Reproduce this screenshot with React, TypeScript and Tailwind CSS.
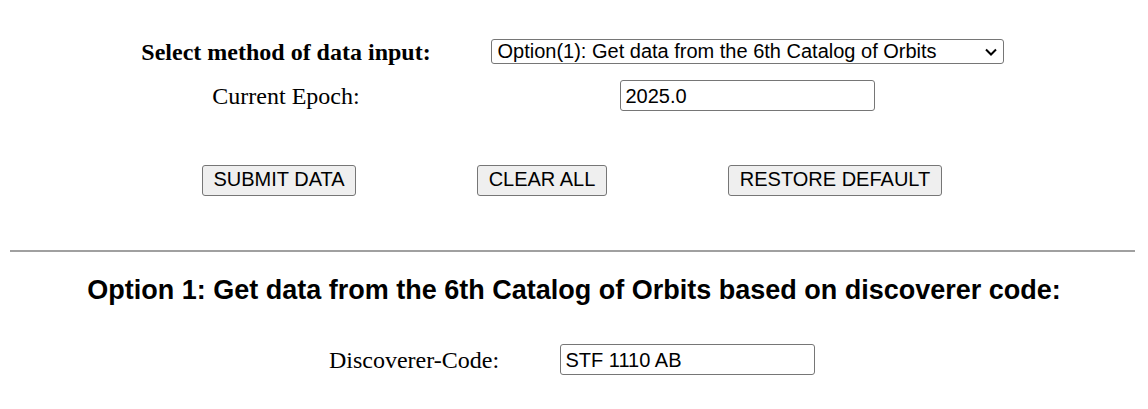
import React from 'react';

export default function App() {
  return (
    <div className="w-[1148px] h-[409px] bg-white text-black overflow-hidden px-[10px]">
      {/* data input method */}
      <div className="pt-[39px] pl-[90px]">
        <div className="flex items-center h-[25px]">
          <div className="w-[372px] flex justify-center">
            <span className="font-['Liberation_Serif',serif] font-bold text-[24px] leading-none whitespace-nowrap">
              Select method of data input:
            </span>
          </div>
          <div className="w-[550px] flex justify-center">
            <div className="relative w-[513px] h-[25px] border border-[#767676] rounded-[3px] bg-white">
              <span className="absolute left-[6px] top-[0px] font-['Liberation_Sans',Arial,sans-serif] text-[20px] leading-[23px] whitespace-nowrap">
                Option(1): Get data from the 6th Catalog of Orbits
              </span>
              <svg className="absolute right-[5px] top-[7px]" width="14" height="10" viewBox="0 0 14 10">
                <path d="M2 2.5 L7 7.5 L12 2.5" fill="none" stroke="#000" strokeWidth="2" />
              </svg>
            </div>
          </div>
        </div>
        <div className="flex items-center h-[31px] mt-[16px]">
          <div className="w-[372px] flex justify-center">
            <span className="font-['Liberation_Serif',serif] text-[24px] leading-none whitespace-nowrap">Current Epoch:</span>
          </div>
          <div className="w-[550px] flex justify-center">
            <div className="w-[255px] h-[31px] border border-[#767676] rounded-[3px] px-[5px] flex items-center font-['Liberation_Sans',Arial,sans-serif] text-[20px]">
              2025.0
            </div>
          </div>
        </div>
      </div>

      {/* buttons */}
      <div className="flex mt-[54px] pl-[140px] font-['Liberation_Sans',Arial,sans-serif] text-[20px]">
        <div className="w-[258px] flex justify-center">
          <button className="h-[31px] w-[154px] border border-[#767676] rounded-[3px] bg-[#efefef] leading-none pb-[3px]">SUBMIT DATA</button>
        </div>
        <div className="w-[268px] flex justify-center">
          <button className="h-[31px] w-[130px] border border-[#767676] rounded-[3px] bg-[#efefef] leading-none pb-[3px]">CLEAR ALL</button>
        </div>
        <div className="w-[318px] flex justify-center">
          <button className="h-[31px] w-[214px] border border-[#767676] rounded-[3px] bg-[#efefef] leading-none pb-[3px]">RESTORE DEFAULT</button>
        </div>
      </div>

      <hr className="mt-[54px] border-0 border-t-2 border-[#a0a0a0] w-[1125px]" />

      <h3 className="mt-[22px] text-center font-['Liberation_Sans',Arial,sans-serif] font-bold text-[27px] leading-[32px] whitespace-nowrap">
        Option 1: Get data from the 6th Catalog of Orbits based on discoverer code:
      </h3>

      <div className="flex items-center mt-[38px] h-[31px] pl-[240px]">
        <div className="w-[328px] flex justify-center">
          <span className="font-['Liberation_Serif',serif] text-[24px] leading-none whitespace-nowrap">Discoverer-Code:</span>
        </div>
        <div className="w-[218px] flex justify-center">
          <div className="shrink-0 w-[255px] h-[31px] border border-[#767676] rounded-[3px] px-[5px] flex items-center font-['Liberation_Sans',Arial,sans-serif] text-[20px]">
            STF 1110 AB
          </div>
        </div>
      </div>
    </div>
  );
}
